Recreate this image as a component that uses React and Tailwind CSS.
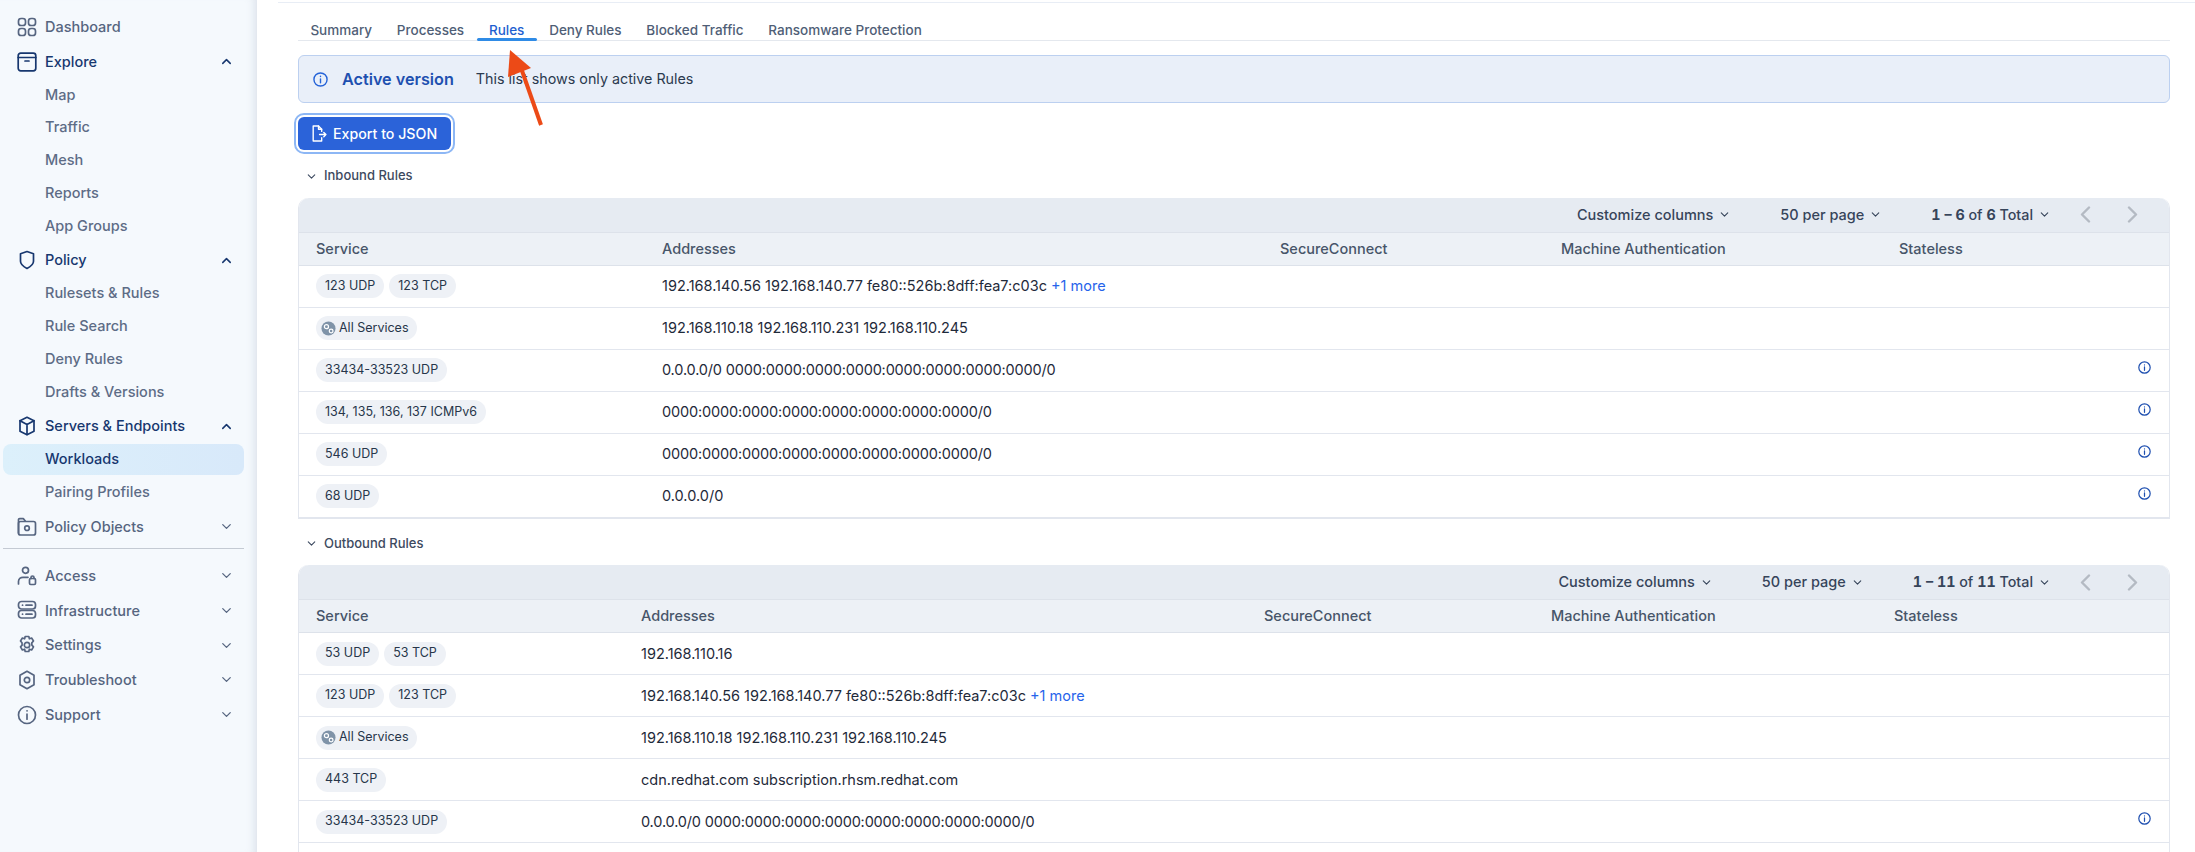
import { ChevronDown, ChevronUp } from 'lucide-react'

const Svg = ({ children }) => (
  <svg viewBox="0 0 20 20" fill="none" stroke="currentColor" strokeWidth="1.7" strokeLinecap="round" strokeLinejoin="round" className="w-[20px] h-[20px] shrink-0">
    {children}
  </svg>
)

const icons = {
  dashboard: (
    <Svg>
      <rect x="1.5" y="1.5" width="7" height="7" rx="2.6" />
      <rect x="11.5" y="1.5" width="7" height="7" rx="2.6" />
      <rect x="1.5" y="11.5" width="7" height="7" rx="2.6" />
      <rect x="11.5" y="11.5" width="7" height="7" rx="2.6" />
    </Svg>
  ),
  explore: (
    <Svg>
      <rect x="1.2" y="1.2" width="17.6" height="17.6" rx="2.5" />
      <path d="M1.2 5.5h17.6M8 9h4" />
    </Svg>
  ),
  policy: (
    <Svg>
      <path d="M10 1.5l6.5 2.2v7.6c0 3-3 5.4-6.5 7.2-3.5-1.8-6.500-4.200-6.500-7.200V3.700z" />
    </Svg>
  ),
  servers: (
    <Svg>
      <path d="M10 1.300l7 3.400v10.600l-7 3.400-7-3.400V4.700z" />
      <path d="M3 4.700l7 3.700 7-3.700M10 8.400v10" />
    </Svg>
  ),
  objects: (
    <Svg>
      <path d="M1.500 16V2.800c0-.7.500-1.200 1.200-1.200h3.600l2 2.400" />
      <rect x="1.500" y="4.500" width="17" height="13.500" rx="2" />
      <circle cx="10" cy="11.200" r="2.300" />
    </Svg>
  ),
  access: (
    <Svg>
      <circle cx="8.500" cy="4.300" r="3" />
      <path d="M1.500 18v-2.500c0-2.500 2-4.200 4.500-4.200h5" />
      <rect x="12.500" y="12.500" width="6" height="6" rx="1.200" />
      <path d="M14 12.500v-1a1.500 1.500 0 0 1 3 0v1" />
    </Svg>
  ),
  infrastructure: (
    <Svg>
      <rect x="1.500" y="1.500" width="17" height="7.500" rx="3" />
      <rect x="1.500" y="10.500" width="17" height="7.500" rx="3" />
      <path d="M5.500 5.200h.1M5.500 14.200h.1M9 5.200h6M9 14.200h6" />
    </Svg>
  ),
  settings: (
    <Svg>
      <path d="M8.200 1.500h3.600l.6 2.300 2.200-.8 1.900 3-1.700 1.800.1 2.400 1.600 1.700-1.900 3.100-2.200-.8-.6 2.300H8.200l-.6-2.300-2.200.8-1.900-3.100L5.100 10.200 5 7.800 3.500 6l1.900-3 2.200.8z" />
      <circle cx="10" cy="10" r="2.700" />
    </Svg>
  ),
  troubleshoot: (
    <Svg>
      <path d="M10 1.300l7 4v9.400l-7 4-7-4V5.300z" />
      <circle cx="10" cy="10" r="2.700" />
    </Svg>
  ),
  support: (
    <Svg>
      <circle cx="10" cy="10" r="8.500" />
      <path d="M10 9.200v5M10 5.800h.1" />
    </Svg>
  ),
}

const InfoIcon = ({ className }) => (
  <svg viewBox="0 0 16 16" fill="none" stroke="currentColor" strokeWidth="1.500" strokeLinecap="round" className={className}>
    <circle cx="8" cy="8" r="7" />
    <path d="M8 7.300v4.200M8 4.600v.2" />
  </svg>
)

const nav = [
  { label: 'Dashboard', icon: 'dashboard' },
  { label: 'Explore', icon: 'explore', open: true, children: ['Map', 'Traffic', 'Mesh', 'Reports', 'App Groups'] },
  { label: 'Policy', icon: 'policy', open: true, children: ['Rulesets & Rules', 'Rule Search', 'Deny Rules', 'Drafts & Versions'] },
  { label: 'Servers & Endpoints', icon: 'servers', open: true, children: ['Workloads', 'Pairing Profiles'] },
  { label: 'Policy Objects', icon: 'objects' },
]

const navBottom = [
  { label: 'Access', icon: 'access' },
  { label: 'Infrastructure', icon: 'infrastructure' },
  { label: 'Settings', icon: 'settings' },
  { label: 'Troubleshoot', icon: 'troubleshoot' },
  { label: 'Support', icon: 'support' },
]

const NavItem = ({ item, h = 'h-[35px]' }) => (
  <div>
    <div className={`flex items-center ${h} pl-[14px] pr-[10px] text-[14.5px] font-medium ${item.open ? 'text-[#17376f]' : 'text-[#566580]'}`}>
      <span className="mr-[8px] flex">{icons[item.icon]}</span>
      <span className="flex-1">{item.label}</span>
      {item.open && <ChevronUp size={15} strokeWidth={2.4} />}
      {!item.open && item.label !== 'Dashboard' && <ChevronDown size={15} strokeWidth={2} />}
    </div>
    {item.children && (
      <div className="-mt-px mb-px">
        {item.children.map((c) => (
          <div key={c} className="h-[32.75px] py-px">
            <div className={`h-full flex items-center pl-[42px] rounded-lg text-[14.5px] font-medium ${c === 'Workloads' ? 'bg-gradient-to-r from-[#dcf0fb] to-[#d8e9fa] text-[#17376f]' : 'text-[#5d6c86]'}`}>
              {c}
            </div>
          </div>
        ))}
      </div>
    )}
  </div>
)

const Chip = ({ children }) => (
  <span className="inline-flex items-center h-[24px] px-[9px] rounded-full bg-[#eef1f6] text-[12.5px] text-[#27364a] whitespace-nowrap">
    {children}
  </span>
)

const AllServices = () => (
  <span className="inline-flex items-center h-[24px] pl-[5px] pr-[9px] rounded-full bg-[#eef1f6] text-[12.5px] text-[#27364a] whitespace-nowrap">
    <svg viewBox="0 0 16 16" className="w-[15px] h-[15px] mr-[3px]">
      <circle cx="8" cy="8" r="7.500" fill="#7f93a8" />
      <circle cx="5.800" cy="6" r="2.200" fill="none" stroke="#fff" strokeWidth="1.300" />
      <circle cx="10.800" cy="10.600" r="2" fill="none" stroke="#fff" strokeWidth="1.300" />
    </svg>
    All Services
  </span>
)

const inbound = [
  { chips: ['123 UDP', '123 TCP'], addr: '192.168.140.56 192.168.140.77 fe80::526b:8dff:fea7:c03c', more: true },
  { all: true, addr: '192.168.110.18 192.168.110.231 192.168.110.245' },
  { chips: ['33434-33523 UDP'], addr: '0.0.0.0/0 0000:0000:0000:0000:0000:0000:0000:0000/0', info: true },
  { chips: ['134, 135, 136, 137 ICMPv6'], addr: '0000:0000:0000:0000:0000:0000:0000:0000/0', info: true },
  { chips: ['546 UDP'], addr: '0000:0000:0000:0000:0000:0000:0000:0000/0', info: true },
  { chips: ['68 UDP'], addr: '0.0.0.0/0', info: true },
]

const outbound = [
  { chips: ['53 UDP', '53 TCP'], addr: '192.168.110.16' },
  { chips: ['123 UDP', '123 TCP'], addr: '192.168.140.56 192.168.140.77 fe80::526b:8dff:fea7:c03c', more: true },
  { all: true, addr: '192.168.110.18 192.168.110.231 192.168.110.245' },
  { chips: ['443 TCP'], addr: 'cdn.redhat.com subscription.rhsm.redhat.com' },
  { chips: ['33434-33523 UDP'], addr: '0.0.0.0/0 0000:0000:0000:0000:0000:0000:0000:0000/0', info: true },
  { chips: [], addr: '' },
]

const headers = ['Service', 'Addresses', 'SecureConnect', 'Machine Authentication', 'Stateless']

const ToolItem = ({ children, gap }) => (
  <div className={`flex items-center text-[14.5px] text-[#36445a] font-medium ${gap}`}>
    {children}
    <ChevronDown size={13} strokeWidth={2} className="ml-[5px]" />
  </div>
)

const RulesTable = ({ title, rows, cols, total, mt }) => (
  <section className={mt}>
    <div className="flex items-center h-[22px] pl-[7px] text-[13px] font-medium text-[#3d4a60]">
      <ChevronDown size={13} strokeWidth={2} className="mr-[6px]" />
      {title}
    </div>
    <div className="mt-[10.5px] border border-t-0 border-[#e2e6ee] rounded-t-[10px]">
      <div className="flex items-center justify-end h-[35px] bg-[#e6ebf2] rounded-t-[10px] border-b border-[#dde2ea] pr-[31px]">
        <ToolItem gap="mr-[49px]">Customize columns</ToolItem>
        <ToolItem gap="mr-[49px]">50 per page</ToolItem>
        <ToolItem gap="mr-[29px]">
          <span className="tabular-nums text-[14.3px]">
            <b className="font-bold">{total[0]}</b> of <b className="font-bold">{total[1]}</b> Total
          </span>
        </ToolItem>
        <svg viewBox="0 0 11 17" fill="none" stroke="#b4bac3" strokeWidth="2.400" strokeLinecap="round" strokeLinejoin="round" className="w-[11px] h-[17px] mr-[36px]">
          <path d="M9 1.500L2 8.500l7 7" />
        </svg>
        <svg viewBox="0 0 11 17" fill="none" stroke="#b4bac3" strokeWidth="2.400" strokeLinecap="round" strokeLinejoin="round" className="w-[11px] h-[17px]">
          <path d="M2 1.500l7 7-7 7" />
        </svg>
      </div>
      <div className={`grid ${cols} items-center h-[33px] bg-[#edf1f6] border-b border-[#dde2ea] text-[14.5px] font-medium text-[#475569]`}>
        {headers.map((h) => (
          <div key={h} className="pl-[17px]">{h}</div>
        ))}
      </div>
      {rows.map((r, i) => (
        <div key={i} className={`grid ${cols} items-center h-[42px] border-b border-[#e2e6ee] text-[14.5px] text-[#1f2a3a]`}>
          <div className="pl-[17px] flex gap-[5px]">
            {r.all && <AllServices />}
            {r.chips && r.chips.map((c) => <Chip key={c}>{c}</Chip>)}
          </div>
          <div className={`pl-[17px] whitespace-nowrap ${r.addr.includes('0000') ? 'tracking-[-0.16px]' : ''}`}>
            {r.addr}
            {r.more && <span className="text-[#2563eb]"> +1 more</span>}
          </div>
          <div />
          <div />
          <div className="flex justify-end pr-[18px]">
            {r.info && <InfoIcon className="w-[13px] h-[13px] text-[#1e4fb0] mb-[6px]" />}
          </div>
        </div>
      ))}
    </div>
  </section>
)

const tabs = ['Summary', 'Processes', 'Rules', 'Deny Rules', 'Blocked Traffic', 'Ransomware Protection']

const App = () => {
  return (
    <div className="relative flex h-[852px] overflow-hidden bg-white [font-family:Inter,sans-serif]">
      <aside className="w-[257px] shrink-0 bg-[#f5f9fd] pt-[9px] px-[3px] shadow-[inset_-10px_0_10px_-8px_rgba(120,135,160,0.22)]">
        <div className="w-[241px]">
          {nav.map((item) => <NavItem key={item.label} item={item} />)}
          <div className="h-px bg-[#c4cad3] mt-[4px] mb-[9px]" />
          {navBottom.map((item) => <NavItem key={item.label} item={item} h="h-[34.75px]" />)}
        </div>
      </aside>

      <main className="flex-1 min-w-0 pr-[25px] pl-[41px]">
        <div className="-ml-[20px] -mr-[25px] h-[3px] border-b border-[#e8edf5]" />
        <div className="flex items-center h-[38px] border-b border-[#e4e8ee] text-[13.5px] font-medium">
          {tabs.map((t) => (
            <div key={t} className={`relative h-full flex items-center pt-[18px] px-[12.4px] ${t === 'Rules' ? 'text-[#1e5fd0]' : 'text-[#4f5e76]'}`}>
              {t}
              {t === 'Rules' && <div className="absolute left-0 right-0 -bottom-px h-[3px] bg-[#2f8be6] rounded-sm" />}
            </div>
          ))}
        </div>

        <div className="mt-[14px] h-[48px] flex items-center pl-[14px] rounded-md bg-[#e9eff9] border border-[#bcd0f0]">
          <InfoIcon className="w-[15px] h-[15px] text-[#2563d8]" />
          <span className="ml-[14px] text-[16.2px] font-semibold text-[#1e50b0]">Active version</span>
          <span className="ml-[22px] text-[14.3px] text-[#2b3a4f]">This list shows only active Rules</span>
        </div>

        <button className="mt-[14px] flex items-center h-[33px] w-[153px] pl-[12px] rounded-md bg-[#2b63d9] text-white text-[14.2px] font-medium ring-2 ring-white outline-2 outline-offset-2 outline-[#8db7f5]">
          <svg viewBox="0 0 16 16" fill="none" stroke="currentColor" strokeWidth="1.300" strokeLinecap="round" strokeLinejoin="round" className="w-[17px] h-[17px] mr-[6px]">
            <path d="M11 6V4L8 1H3v14h8v-3" />
            <path d="M8 1v3h3M9 9h6M13 7l2 2-2 2" />
          </svg>
          Export to JSON
        </button>

        <RulesTable
          title="Inbound Rules"
          rows={inbound}
          total={['1 – 6', '6']}
          cols="grid-cols-[346px_618px_281px_338px_1fr]"
          mt="mt-[15px]"
        />
        <RulesTable
          title="Outbound Rules"
          rows={outbound}
          total={['1 – 11', '11']}
          cols="grid-cols-[325px_623px_287px_343px_1fr]"
          mt="mt-[14px]"
        />
      </main>

      <svg viewBox="0 0 50 90" className="absolute left-[500px] top-[45px] w-[50px] h-[90px] pointer-events-none">
        <path d="M41 80L20 20" stroke="#ec4a17" strokeWidth="4" fill="none" />
        <path d="M10 5L8 32 31 23z" fill="#ec4a17" />
      </svg>
    </div>
  )
}

export default App
